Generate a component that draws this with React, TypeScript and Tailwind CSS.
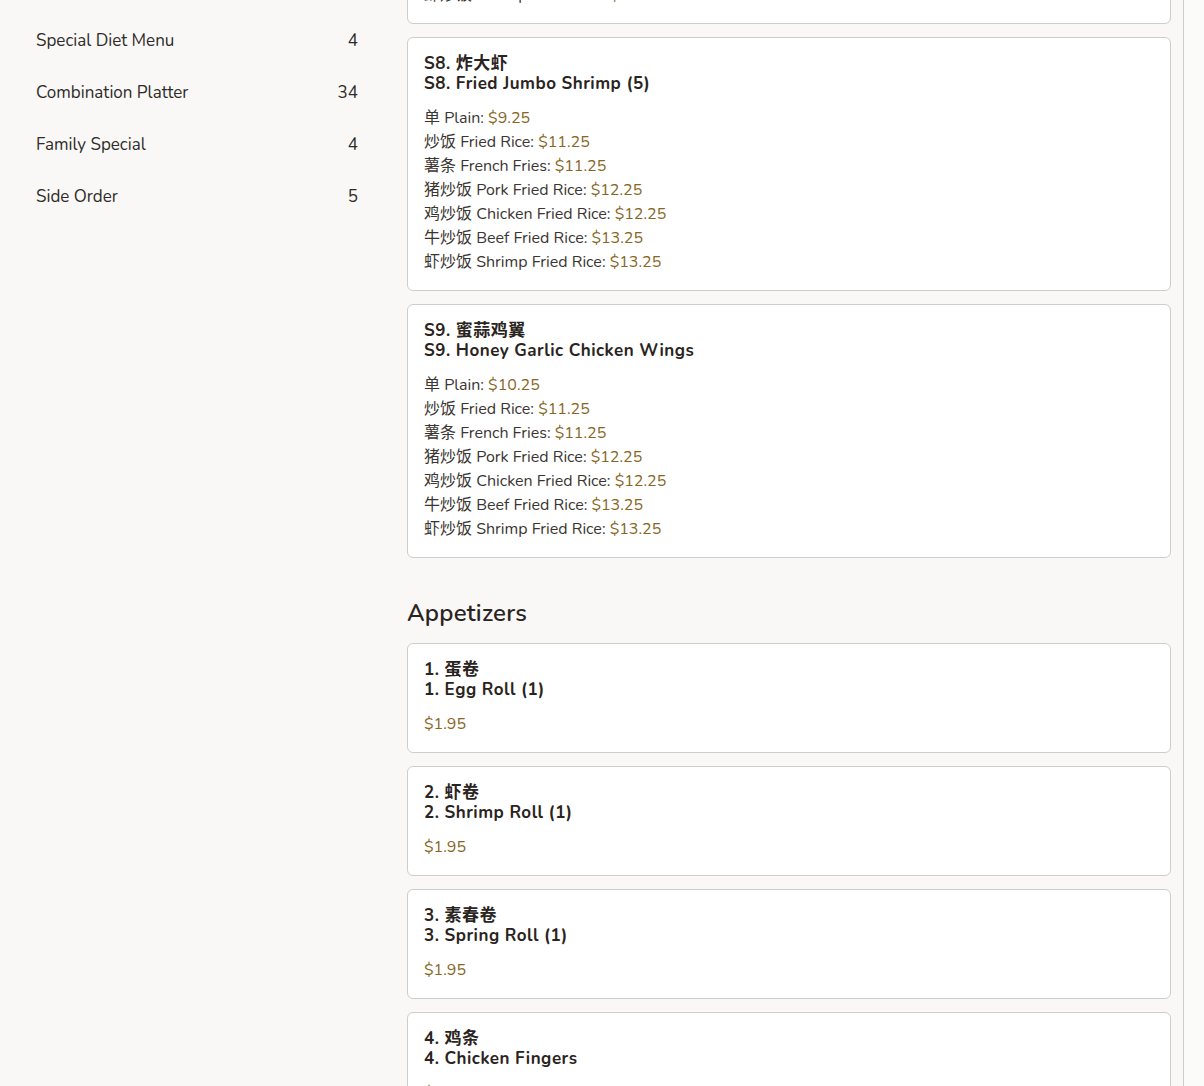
import React from 'react';

type Option = { zh: string; en: string; price: string };
type Dish = { code: string; zh: string; en: string; price?: string; options?: Option[] };

const riceOptions = (plain: string): Option[] => [
  { zh: '单', en: 'Plain', price: plain },
  { zh: '炒饭', en: 'Fried Rice', price: '$11.25' },
  { zh: '薯条', en: 'French Fries', price: '$11.25' },
  { zh: '猪炒饭', en: 'Pork Fried Rice', price: '$12.25' },
  { zh: '鸡炒饭', en: 'Chicken Fried Rice', price: '$12.25' },
  { zh: '牛炒饭', en: 'Beef Fried Rice', price: '$13.25' },
  { zh: '虾炒饭', en: 'Shrimp Fried Rice', price: '$13.25' },
];

const specials: Dish[] = [
  { code: 'S7.', zh: '芝麻鸡', en: 'Sesame Chicken', options: riceOptions('$9.25') },
  { code: 'S8.', zh: '炸大虾', en: 'Fried Jumbo Shrimp (5)', options: riceOptions('$9.25') },
  { code: 'S9.', zh: '蜜蒜鸡翼', en: 'Honey Garlic Chicken Wings', options: riceOptions('$10.25') },
];

const appetizers: Dish[] = [
  { code: '1.', zh: '蛋卷', en: 'Egg Roll (1)', price: '$1.95' },
  { code: '2.', zh: '虾卷', en: 'Shrimp Roll (1)', price: '$1.95' },
  { code: '3.', zh: '素春卷', en: 'Spring Roll (1)', price: '$1.95' },
  { code: '4.', zh: '鸡条', en: 'Chicken Fingers', price: '$6.25' },
];

const categories = [
  { name: 'Special Diet Menu', count: 4 },
  { name: 'Combination Platter', count: 34 },
  { name: 'Family Special', count: 4 },
  { name: 'Side Order', count: 5 },
];

const DishCard = ({ dish }: { dish: Dish }) => (
  <div className="rounded-md border border-[#cfcdca] bg-white px-4 py-4">
    <div className="text-[17px] font-bold leading-5 tracking-[0.5px] text-[#2a2421]">
      <div>{dish.code} {dish.zh}</div>
      <div>{dish.code} {dish.en}</div>
    </div>
    <div className="mt-3 text-[16px] leading-6 text-[#3a3531]">
      {dish.options ? (
        dish.options.map((o) => (
          <div key={o.en}>
            {o.zh} {o.en}: <span className="text-[#87661f]">{o.price}</span>
          </div>
        ))
      ) : (
        <div className="text-[#87661f]">{dish.price}</div>
      )}
    </div>
  </div>
);

export default function App() {
  return (
    <div
      className="flex h-[1086px] overflow-hidden bg-[#f9f8f7]"
      style={{ fontFamily: 'Nunito, Lato, "Noto Sans CJK SC", sans-serif' }}
    >
      {/* Category sidebar */}
      <aside className="w-[394px] shrink-0 px-9 pt-[15px]">
        {categories.map((c) => (
          <div key={c.name} className="flex h-[52px] items-center justify-between text-[17px] text-[#2f2b28]">
            <span>{c.name}</span>
            <span>{c.count}</span>
          </div>
        ))}
      </aside>

      {/* Menu items */}
      <main className="ml-[13px] mt-[-230px] flex w-[764px] shrink-0 flex-col gap-[13px]">
        {specials.map((d) => (
          <DishCard key={d.code} dish={d} />
        ))}
        <h2 className="mt-[26px] mb-px text-[24px] font-semibold leading-8 tracking-[0.2px] text-[#2a2421]">Appetizers</h2>
        {appetizers.map((d) => (
          <DishCard key={d.code} dish={d} />
        ))}
      </main>

      <div className="ml-3 w-[21px] shrink-0 border-l border-[#cfcdca] bg-[#fbfbfa]" />
    </div>
  );
}
